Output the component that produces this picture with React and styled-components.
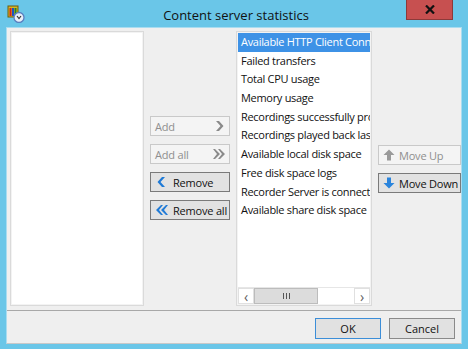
import React from 'react';
import styled, { createGlobalStyle } from 'styled-components';

const GlobalStyle = createGlobalStyle`
  html, body { margin: 0; padding: 0; background: #6ac6e8; }
  * { box-sizing: border-box; }
`;

const items = [
  'Available HTTP Client Connections',
  'Failed transfers',
  'Total CPU usage',
  'Memory usage',
  'Recordings successfully processed',
  'Recordings played back last hour',
  'Available local disk space',
  'Free disk space logs',
  'Recorder Server is connected',
  'Available share disk space',
];

const Chevron = ({ double, left, color }) => (
  <svg width="14" height="12" viewBox="0 0 14 12" style={{ flexShrink: 0 }}>
    {left ? (
      double ? (
        <g fill={color}>
          <path d="M6 1 L8 1 L4 6 L8 11 L6 11 L1 6 Z" />
          <path d="M11 1 L13 1 L9 6 L13 11 L11 11 L6 6 Z" />
        </g>
      ) : (
        <path d="M7 1 L10 1 L5.5 6 L10 11 L7 11 L2.5 6 Z" fill={color} />
      )
    ) : double ? (
      <g fill={color}>
        <path d="M1 1 L3 1 L8 6 L3 11 L1 11 L5 6 Z" />
        <path d="M6 1 L8 1 L13 6 L8 11 L6 11 L10 6 Z" />
      </g>
    ) : (
      <path d="M4 1 L7 1 L11.5 6 L7 11 L4 11 L8.5 6 Z" fill={color} />
    )}
  </svg>
);

const BlockArrow = ({ up, color }) => (
  <svg width="12" height="12" viewBox="0 0 12 12" style={{ flexShrink: 0 }}>
    {up ? (
      <path d="M6 0.5 L11.5 6 L8 6 L8 11.5 L4 11.5 L4 6 L0.5 6 Z" fill={color} />
    ) : (
      <path d="M4 0.5 L8 0.5 L8 6 L11.5 6 L6 11.5 L0.5 6 L4 6 Z" fill={color} />
    )}
  </svg>
);

const AppIcon = () => (
  <svg width="18" height="18" viewBox="0 0 18 18">
    <rect x="1" y="1" width="10" height="11" fill="#d8b820" stroke="#6b5a10" strokeWidth="1" />
    <rect x="2.5" y="3" width="2" height="8" fill="#d02020" />
    <rect x="5" y="3" width="2" height="8" fill="#2050c0" />
    <rect x="7.5" y="3" width="2" height="8" fill="#208030" />
    <circle cx="12" cy="12.5" r="5" fill="#e8eef8" stroke="#5a7fc0" strokeWidth="1.3" />
    <path d="M10 11 L12 13.5 L14 11" fill="none" stroke="#333" strokeWidth="1.2" />
  </svg>
);

const App = () => {
  return (
    <>
      <GlobalStyle />
      <Window>
        <TitleBar>
          <IconSlot>
            <AppIcon />
          </IconSlot>
          <Title>Content server statistics</Title>
          <CloseButton>
            <svg width="10" height="9" viewBox="0 0 10 9">
              <path d="M1 0.5 L9 8.5 M9 0.5 L1 8.5" stroke="#111" strokeWidth="2.2" />
            </svg>
          </CloseButton>
        </TitleBar>
        <Body>
          <Main>
            <ListBox />
            <ButtonColumn>
              <ActionButton disabled>
                <span>Add</span>
                <Chevron color="#8a8a8a" />
              </ActionButton>
              <ActionButton disabled>
                <span>Add all</span>
                <Chevron double color="#8a8a8a" />
              </ActionButton>
              <ActionButton>
                <Chevron left color="#1f7ad6" />
                <span>Remove</span>
              </ActionButton>
              <ActionButton>
                <Chevron left double color="#1f7ad6" />
                <span>Remove all</span>
              </ActionButton>
            </ButtonColumn>
            <ListBox $wide>
              <Items>
                {items.map((text, i) => (
                  <Item key={text} $selected={i === 0}>
                    {text}
                  </Item>
                ))}
              </Items>
              <ScrollBar>
                <ScrollArrow>‹</ScrollArrow>
                <Track>
                  <Thumb>
                    <Grip />
                  </Thumb>
                </Track>
                <ScrollArrow>›</ScrollArrow>
              </ScrollBar>
            </ListBox>
            <MoveColumn>
              <ActionButton disabled $start>
                <BlockArrow up color="#9a9a9a" />
                <span>Move Up</span>
              </ActionButton>
              <ActionButton $start>
                <BlockArrow color="#2a84dc" />
                <span>Move Down</span>
              </ActionButton>
            </MoveColumn>
          </Main>
          <Footer>
            <DialogButton $default>OK</DialogButton>
            <DialogButton>Cancel</DialogButton>
          </Footer>
        </Body>
      </Window>
    </>
  );
};

export default App;

const Window = styled.div`
  width: 468px;
  height: 349px;
  background: #6ac6e8;
  padding: 0 6px 5px 6px;
  display: flex;
  flex-direction: column;
  font-family: "Open Sans", "Noto Sans", sans-serif;
`;

const TitleBar = styled.div`
  position: relative;
  height: 27px;
  display: flex;
  align-items: center;
  justify-content: center;
`;

const IconSlot = styled.div`
  position: absolute;
  left: 1px;
  top: 5px;
  width: 18px;
  height: 18px;
`;

const Title = styled.div`
  font-size: 13px;
  color: #111;
  margin-top: 2px;
  margin-left: 4px;
`;

const CloseButton = styled.div`
  position: absolute;
  right: 9px;
  top: 0;
  width: 47px;
  height: 20px;
  background: #c75050;
  border: 1px solid #8c3a3a;
  border-top: none;
  display: flex;
  align-items: center;
  justify-content: center;
`;

const Body = styled.div`
  flex: 1;
  background: #efefef;
  border: 1px solid #a9dcf0;
  border-bottom-color: #c8c8c8;
  display: flex;
  flex-direction: column;
`;

const Main = styled.div`
  height: 283px;
  padding: 3px 0 0 3px;
  display: flex;
  align-items: flex-start;
  gap: 6px;
  border-bottom: 1px solid #a8a8a8;
`;

const ListBox = styled.div`
  width: ${p => (p.$wide ? '137px' : '135px')};
  height: 275px;
  background: #fff;
  border: 1px solid #dadada;
  box-shadow: inset 0 0 0 1px #f3f3f3;
  display: flex;
  flex-direction: column;
  overflow: hidden;
`;

const ButtonColumn = styled.div`
  width: 80px;
  padding-top: 85px;
  display: flex;
  flex-direction: column;
  gap: 8px;
`;

const MoveColumn = styled.div`
  width: 83px;
  padding-top: 114px;
  display: flex;
  flex-direction: column;
  gap: 8px;
`;

const ActionButton = styled.div`
  height: 20px;
  padding: 0 3px 0 4px;
  display: flex;
  align-items: center;
  justify-content: ${p => (p.disabled && !p.$start ? 'space-between' : 'flex-start')};
  gap: 4px;
  font-size: 11px;
  letter-spacing: -0.2px;
  color: ${p => (p.disabled ? '#8f8f8f' : '#111')};
  background: ${p => (p.disabled ? '#f4f4f4' : '#e2e2e2')};
  border: 1px solid ${p => (p.disabled ? '#c9c9c9' : '#7a7a7a')};
  white-space: nowrap;
`;

const Items = styled.div`
  flex: 1;
  padding: 1px 1px 0 1px;
`;

const Item = styled.div`
  height: 18.7px;
  line-height: 18.7px;
  padding-left: 3px;
  font-size: 11px;
  letter-spacing: -0.3px;
  white-space: nowrap;
  overflow: hidden;
  color: ${p => (p.$selected ? '#fff' : '#111')};
  background: ${p => (p.$selected ? '#3e92e6' : 'transparent')};
`;

const ScrollBar = styled.div`
  height: 17px;
  margin: 0 1px 1px 1px;
  display: flex;
  background: #f0f0f0;
  border-top: 1px solid #e6e6e6;
`;

const ScrollArrow = styled.div`
  width: 16px;
  display: flex;
  align-items: center;
  justify-content: center;
  font-size: 14px;
  color: #606060;
  background: #fff;
  border: 1px solid #e0e0e0;
`;

const Track = styled.div`
  flex: 1;
  background: #fff;
  display: flex;
`;

const Thumb = styled.div`
  width: 64px;
  background: #dcdcdc;
  border: 1px solid #bcbcbc;
  display: flex;
  align-items: center;
  justify-content: center;
`;

const Grip = styled.div`
  width: 7px;
  height: 6px;
  border-left: 1px solid #555;
  border-right: 1px solid #555;
  background: linear-gradient(#555, #555) center / 1px 6px no-repeat;
`;

const Footer = styled.div`
  flex: 1;
  display: flex;
  justify-content: flex-end;
  align-items: flex-start;
  gap: 8px;
  padding: 7px 6px 0 0;
`;

const DialogButton = styled.div`
  width: 66px;
  height: 21px;
  display: flex;
  align-items: center;
  justify-content: center;
  font-size: 11px;
  color: #111;
  background: #e1e1e1;
  border: 1px solid ${p => (p.$default ? '#3c8ed8' : '#8a8a8a')};
`;
